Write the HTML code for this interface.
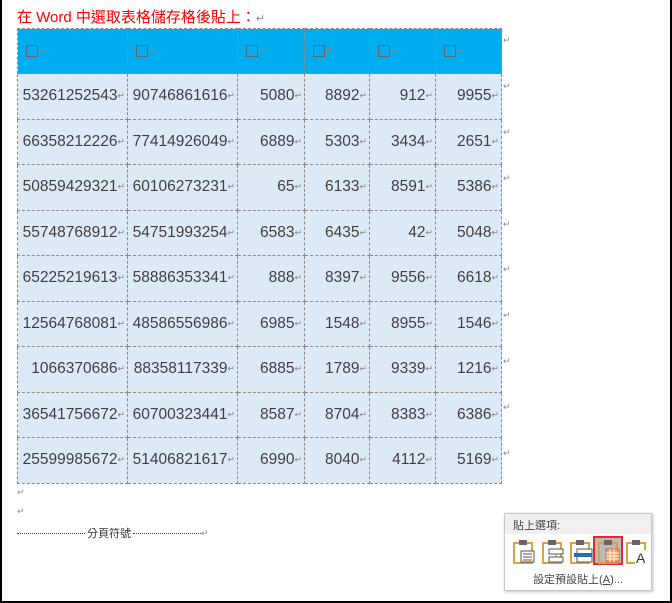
<!DOCTYPE html>
<html><head><meta charset="utf-8"><style>
*{margin:0;padding:0;box-sizing:border-box}
body{width:672px;height:603px;background:#fff;position:relative;overflow:hidden;font-family:"Liberation Sans","Noto Sans CJK TC",sans-serif}
.frame{position:absolute;left:0;top:0;width:672px;height:603px;border:2px solid #000;border-top:none}
.title{position:absolute;left:17px;top:6px;font-size:15px;color:#f00}
.title small{color:#888;font-size:11px}
table{position:absolute;left:17px;top:28px;width:484px;border-collapse:collapse;table-layout:fixed}
td{border:1px dashed #8a8a8a;font-size:15.5px;color:#404040;text-align:right;padding-right:2px;height:45.5px;background:#dde9f5;white-space:nowrap;overflow:visible}
tr.h td{background:#00aeef;height:45px;text-align:left;padding-left:8px}
.box{display:inline-block;width:12px;height:12px;border:1.5px solid #5a6a78;vertical-align:middle}
.r{font-size:9px;color:#888;vertical-align:middle}
.re{position:absolute;left:503px;font-size:9px;color:#888}
.p{position:absolute;left:17px;font-size:9px;color:#888}
.brk{position:absolute;left:17px;top:525px;font-size:11px;color:#333;display:flex;align-items:center}
.dot{border-top:1px dotted #444;height:0}
.pop{position:absolute;left:504px;top:513px;width:148px;height:78px;background:#fff;border:1px solid #c6c6c6;box-shadow:1px 1px 3px rgba(0,0,0,.25)}
.pop .hd{height:20px;background:#f0f0f0;font-size:11px;color:#444;padding:3px 0 0 8px}
.pop .ft{position:absolute;left:0;right:0;top:57px;text-align:center;font-size:11px;color:#444}
.ic{position:absolute;top:24px;width:26px;height:27px}
.sel{position:absolute;left:88px;top:22px;width:30px;height:29px;background:#bbb;border:2px solid #e8262b}
</style></head><body>
<div class="frame"></div>
<div class="title">在 Word 中選取表格儲存格後貼上：<small>↵</small></div>
<table>
<colgroup><col style="width:110px"><col style="width:110px"><col style="width:67px"><col style="width:65px"><col style="width:66px"><col style="width:66px"></colgroup>
<tr class="h"><td><span class="box"></span><span class="r">↵</span></td><td><span class="box"></span><span class="r">↵</span></td><td><span class="box"></span><span class="r">↵</span></td><td><span class="box"></span><span class="r">↵</span></td><td><span class="box"></span><span class="r">↵</span></td><td><span class="box"></span><span class="r">↵</span></td></tr>
<tr><td>53261252543<span class="r">↵</span></td><td>90746861616<span class="r">↵</span></td><td>5080<span class="r">↵</span></td><td>8892<span class="r">↵</span></td><td>912<span class="r">↵</span></td><td>9955<span class="r">↵</span></td></tr>
<tr><td>66358212226<span class="r">↵</span></td><td>77414926049<span class="r">↵</span></td><td>6889<span class="r">↵</span></td><td>5303<span class="r">↵</span></td><td>3434<span class="r">↵</span></td><td>2651<span class="r">↵</span></td></tr>
<tr><td>50859429321<span class="r">↵</span></td><td>60106273231<span class="r">↵</span></td><td>65<span class="r">↵</span></td><td>6133<span class="r">↵</span></td><td>8591<span class="r">↵</span></td><td>5386<span class="r">↵</span></td></tr>
<tr><td>55748768912<span class="r">↵</span></td><td>54751993254<span class="r">↵</span></td><td>6583<span class="r">↵</span></td><td>6435<span class="r">↵</span></td><td>42<span class="r">↵</span></td><td>5048<span class="r">↵</span></td></tr>
<tr><td>65225219613<span class="r">↵</span></td><td>58886353341<span class="r">↵</span></td><td>888<span class="r">↵</span></td><td>8397<span class="r">↵</span></td><td>9556<span class="r">↵</span></td><td>6618<span class="r">↵</span></td></tr>
<tr><td>12564768081<span class="r">↵</span></td><td>48586556986<span class="r">↵</span></td><td>6985<span class="r">↵</span></td><td>1548<span class="r">↵</span></td><td>8955<span class="r">↵</span></td><td>1546<span class="r">↵</span></td></tr>
<tr><td>1066370686<span class="r">↵</span></td><td>88358117339<span class="r">↵</span></td><td>6885<span class="r">↵</span></td><td>1789<span class="r">↵</span></td><td>9339<span class="r">↵</span></td><td>1216<span class="r">↵</span></td></tr>
<tr><td>36541756672<span class="r">↵</span></td><td>60700323441<span class="r">↵</span></td><td>8587<span class="r">↵</span></td><td>8704<span class="r">↵</span></td><td>8383<span class="r">↵</span></td><td>6386<span class="r">↵</span></td></tr>
<tr><td>25599985672<span class="r">↵</span></td><td>51406821617<span class="r">↵</span></td><td>6990<span class="r">↵</span></td><td>8040<span class="r">↵</span></td><td>4112<span class="r">↵</span></td><td>5169<span class="r">↵</span></td></tr>
</table>
<div class="re" style="top:35px">↵</div><div class="re" style="top:81px">↵</div><div class="re" style="top:127px">↵</div><div class="re" style="top:173px">↵</div><div class="re" style="top:219px">↵</div><div class="re" style="top:264px">↵</div><div class="re" style="top:310px">↵</div><div class="re" style="top:356px">↵</div><div class="re" style="top:402px">↵</div><div class="re" style="top:448px">↵</div>
<div class="p" style="top:487px">↵</div>
<div class="p" style="top:506px">↵</div>
<div class="brk"><span class="dot" style="width:68px"></span><span style="margin:0 2px">分頁符號</span><span class="dot" style="width:68px"></span><span style="font-size:9px;color:#888">↵</span></div>
<div class="pop">
<div class="hd">貼上選項:</div>
<div class="sel"></div>
<svg class="ic" style="left:6px" viewBox="0 0 26 27"><path d="M3 5h18v20H3z" fill="none" stroke="#e0a040" stroke-width="2"/><rect x="8" y="2" width="8" height="5" fill="#666"/><rect x="10" y="13" width="13" height="11" fill="#fff" stroke="#555"/><path d="M12 16h9M12 19h9M12 22h9" stroke="#555"/></svg>
<svg class="ic" style="left:35px" viewBox="0 0 26 27"><path d="M3 5h18v20H3z" fill="none" stroke="#e0a040" stroke-width="2"/><rect x="8" y="2" width="8" height="5" fill="#666"/><rect x="9" y="11" width="14" height="5" fill="#fff" stroke="#555"/><rect x="9" y="19" width="14" height="5" fill="#fff" stroke="#555"/><path d="M16 16v3" stroke="#2a8"/></svg>
<svg class="ic" style="left:63px" viewBox="0 0 26 27"><path d="M3 5h18v20H3z" fill="none" stroke="#e0a040" stroke-width="2"/><rect x="8" y="2" width="8" height="5" fill="#666"/><rect x="9" y="11" width="15" height="13" fill="#fff" stroke="#555"/><rect x="6" y="15" width="18" height="4" fill="#2a6ab8"/></svg>
<svg class="ic" style="left:91px" viewBox="0 0 26 27"><path d="M3 5h18v20H3z" fill="none" stroke="#e0a040" stroke-width="2"/><rect x="8" y="2" width="8" height="5" fill="#666"/><rect x="10" y="11" width="13" height="13" fill="#f5a050" stroke="#c65"/><path d="M10 15h13M10 18h13M10 21h13M14 11v13M18 11v13" stroke="#fff"/></svg>
<svg class="ic" style="left:119px" viewBox="0 0 26 27"><path d="M3 5h18v20H3z" fill="none" stroke="#e0a040" stroke-width="2"/><rect x="8" y="2" width="8" height="5" fill="#666"/><rect x="11" y="12" width="14" height="14" fill="#fff"/><text x="12" y="25" font-size="14" font-family="Liberation Sans" fill="#333">A</text></svg>
<div class="ft">設定預設貼上(<u>A</u>)...</div>
</div>
</body></html>
